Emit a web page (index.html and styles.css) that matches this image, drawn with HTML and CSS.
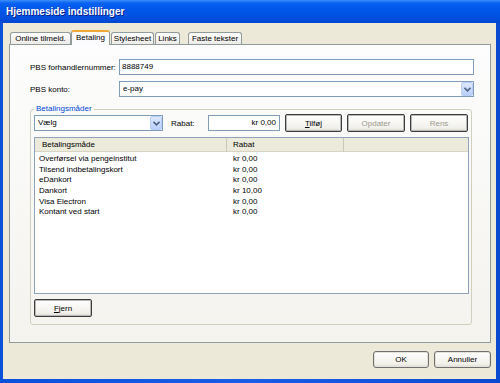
FILE: index.html
```html
<!DOCTYPE html>
<html lang="da">
<head>
  <meta charset="UTF-8" />
  <title>Hjemmeside indstillinger</title>
  <link rel="stylesheet" href="styles.css">
</head>
<body>
<div class="window">
  <div class="titlebar">Hjemmeside indstillinger</div>
  <div class="client">
    <div class="tabs">
      <div class="tab t1">Online tilmeld.</div>
      <div class="tab active t2">Betaling</div>
      <div class="tab t3">Stylesheet</div>
      <div class="tab t4">Links</div>
      <div class="tab t5">Faste tekster</div>
    </div>
    <div class="panel">
      <div class="field">
        <label>PBS forhandlernummer:</label>
        <div class="input">8888749</div>
      </div>
      <div class="field second">
        <label>PBS konto:</label>
        <div class="input combo">e-pay
          <span class="drop"><svg width="7" height="5" viewBox="0 0 7 5"><path d="M0.5 0.8 L3.5 3.8 L6.5 0.8" fill="none" stroke="#4d6185" stroke-width="1.6"/></svg></span>
        </div>
      </div>
      <fieldset class="group">
        <legend>Betalingsmåder</legend>
        <div class="toolbar">
          <div class="input combo choose">Vælg
            <span class="drop"><svg width="7" height="5" viewBox="0 0 7 5"><path d="M0.5 0.8 L3.5 3.8 L6.5 0.8" fill="none" stroke="#4d6185" stroke-width="1.6"/></svg></span>
          </div>
          <span class="rabat">Rabat:</span>
          <div class="input amount">kr 0,00</div>
          <button class="btn add"><u>T</u>ilføj</button>
          <button class="btn off">Opdater</button>
          <button class="btn off">Rens</button>
        </div>
        <div class="list">
          <div class="head">
            <div>Betalingsmåde</div>
            <div>Rabat</div>
            <div></div>
          </div>
          <div class="rows">
            <div class="row"><span>Overførsel via pengeinstitut</span><span>kr 0,00</span></div>
            <div class="row"><span>Tilsend indbetalingskort</span><span>kr 0,00</span></div>
            <div class="row"><span>eDankort</span><span>kr 0,00</span></div>
            <div class="row"><span>Dankort</span><span>kr 10,00</span></div>
            <div class="row"><span>Visa Electron</span><span>kr 0,00</span></div>
            <div class="row"><span>Kontant ved start</span><span>kr 0,00</span></div>
          </div>
        </div>
        <button class="btn remove"><u>F</u>jern</button>
      </fieldset>
    </div>
    <div class="footer">
      <button class="btn ok">OK</button>
      <button class="btn cancel">Annuller</button>
    </div>
  </div>
</div>
</body>
</html>
```

FILE: styles.css
```css
* { box-sizing: border-box; }
body {
  margin: 0;
  font-family: "Liberation Sans", Arial, sans-serif;
  font-size: 8px;
  color: #000;
  background: #fff;
}
.window {
  width: 500px;
  height: 383px;
  display: flex;
  flex-direction: column;
  background: linear-gradient(90deg, #0a50d8, #1a5ee6 50%, #0a4ad0);
}
.titlebar {
  height: 23px;
  flex: none;
  padding-left: 6px;
  line-height: 24px;
  font-size: 10px;
  font-weight: bold;
  color: #fff;
  text-shadow: 1px 1px 0 #0a1e8a;
  background: linear-gradient(#3d8eff 0, #0a63f0 3px, #0058ec 8px, #0052e2 16px, #0046d0 23px);
}
.client {
  flex: none;
  height: 356px;
  margin: 0 4px 0 3px;
  padding: 7px 5px 0 6px;
  background: #ece9d8;
}
.tabs {
  display: flex;
  align-items: flex-end;
  height: 14px;
}
.tab {
  height: 12px;
  line-height: 11px;
  text-align: center;
  border: 1px solid #919b9c;
  border-bottom: none;
  border-radius: 3px 3px 0 0;
  background: linear-gradient(#ffffff, #ecebe6);
}
.t1 { width: 61px; margin-left: 1px; }
.t2 { width: 39px; }
.t3 { width: 43px; margin-left: 1px; }
.t4 { width: 25px; margin-left: 1px; }
.t5 { width: 54px; margin-left: 8px; }
.tab.active {
  height: 15px;
  margin-bottom: -1px;
  position: relative;
  line-height: 12px;
  border-top: 2px solid #f0a83a;
  background: #fcfcfe;
}
.panel {
  width: 482px;
  height: 299px;
  padding: 14px 16px 0 20px;
  border: 1px solid #919b9c;
  background: linear-gradient(#fdfdfd, #f4f3ee);
}
.field {
  display: flex;
  align-items: center;
}
.field.second { margin-top: 6px; }
.field label { width: 89px; flex: none; }
.input {
  height: 16px;
  flex: 1;
  padding-left: 2px;
  line-height: 14px;
  border: 1px solid #7f9db9;
  background: #fff;
}
.combo {
  display: flex;
  align-items: center;
  justify-content: space-between;
  padding-left: 3px;
}
.drop {
  width: 12px;
  height: 14px;
  display: flex;
  align-items: center;
  justify-content: center;
  border: 1px solid #b9cdf6;
  border-radius: 2px;
  background: linear-gradient(#dde8fe, #b9cffb);
}
.group {
  margin: 7px 2px 0 0;
  padding: 0 2px 7px 3px;
  min-width: 0;
  border: 1px solid #d0d0bf;
  border-radius: 3px;
}
.group legend {
  padding: 0 2px;
  line-height: 10px;
  color: #0046d5;
}
.toolbar {
  display: flex;
  align-items: center;
  height: 18px;
}
.choose { flex: none; width: 129px; }
.rabat { width: 37px; margin-left: 8px; }
.amount {
  flex: none;
  width: 72px;
  padding-right: 3px;
  text-align: right;
}
.btn {
  height: 18px;
  padding: 0;
  font: inherit;
  color: #000;
  border: 1px solid #3c3c3c;
  border-radius: 2px;
  box-shadow: inset 0 0 0 1px #b8b8b8;
  background: linear-gradient(#ffffff, #f1f0ea 80%, #dedcd0);
}
.add { width: 57px; margin-left: 5px; }
.off { width: 58px; margin-left: 5px; color: #9d9a8d; }
.list {
  height: 157px;
  margin-top: 5px;
  border: 1px solid #8ea3b9;
  background: #fff;
}
.head {
  display: grid;
  grid-template-columns: 192px 117px 1fr;
  height: 14px;
  line-height: 14px;
  background: #ebeadb;
  border-bottom: 1px solid #d8d4c4;
}
.head div { padding-left: 7px; border-right: 1px solid #cbc7b8; }
.head div + div { padding-left: 6px; }
.head div:last-child { border-right: none; }
.rows { padding-top: 2px; }
.row {
  display: grid;
  grid-template-columns: 192px 117px;
  height: 10.7px;
  line-height: 10.7px;
}
.row span { padding-left: 4px; }
.row span + span { padding-left: 6px; }
.remove { width: 58px; margin-top: 5px; display: block; }
.footer {
  display: flex;
  justify-content: flex-end;
  margin-top: 8px;
}
.ok, .cancel {
  height: 17px;
  border-color: #707070;
  border-radius: 3px;
  box-shadow: inset 0 0 0 1px #e4e2d8;
}
.ok { width: 56px; }
.cancel { width: 57px; margin-left: 5px; }
```
